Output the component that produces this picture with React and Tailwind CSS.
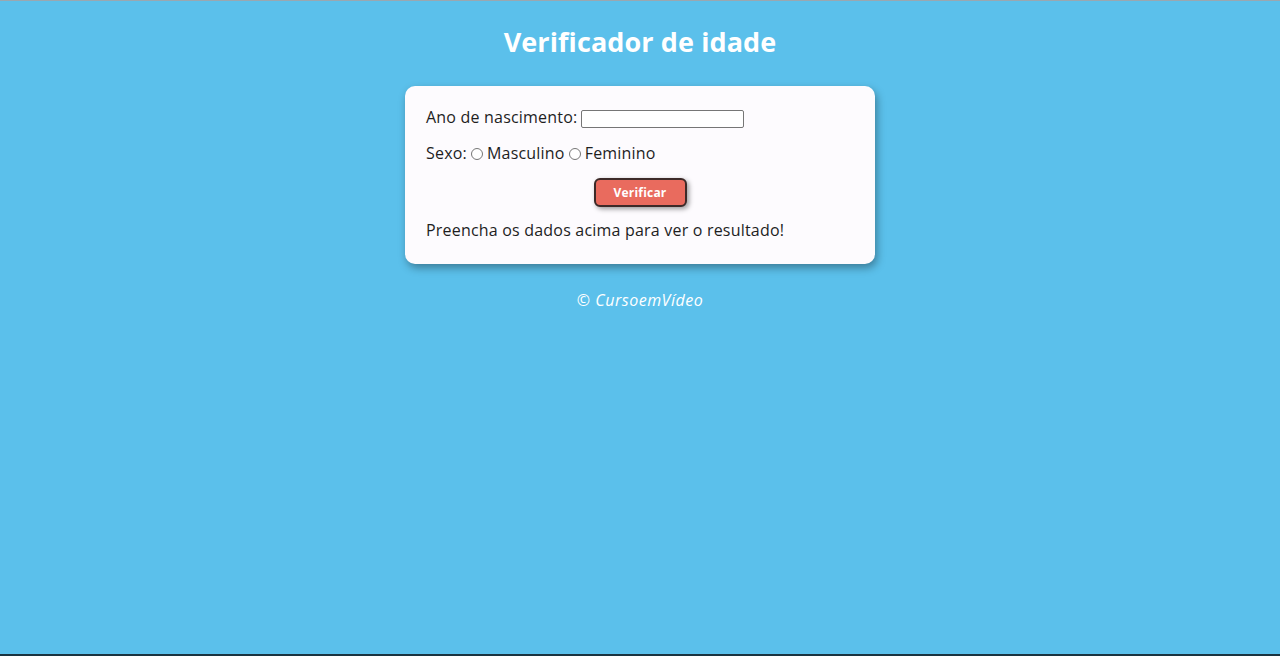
export default function App() {
  return (
    <div className="min-h-[656px] bg-[#5bc0eb] flex flex-col items-center border-t border-[#9aa7b0]" style={{ fontFamily: '"Open Sans", sans-serif' }}>
      <h1 className="mt-[22px] text-[27px] leading-[38px] font-bold text-white tracking-[0.1px]">Verificador de idade</h1>
      <div className="mt-[25px] w-[470px] bg-[#fdfbfe] rounded-[10px] shadow-[2px_4px_8px_rgba(0,0,0,0.35)] px-[21px] pt-[22px] pb-[23px] text-[16px] tracking-[0.2px] text-[#1e1e1e]">
        <div className="flex items-center h-[22px]">
          <span className="mb-[4px]">Ano de nascimento:</span>
          <input type="text" className="ml-[4px] w-[163px] h-[18px] border border-[#767676] rounded-[2px] bg-white" />
        </div>
        <div className="flex items-center h-[22px] mt-[14px]">
          <span className="mb-[4px]">Sexo:</span>
          <span className="ml-[4px] mb-[3px] w-[12px] h-[12px] rounded-full border border-[#767676] bg-white inline-block"></span>
          <span className="ml-[4px] mb-[4px]">Masculino</span>
          <span className="ml-[4px] mb-[3px] w-[12px] h-[12px] rounded-full border border-[#767676] bg-white inline-block"></span>
          <span className="ml-[4px] mb-[4px]">Feminino</span>
        </div>
        <div className="flex justify-center mt-[12px]">
          <button className="w-[93px] h-[29px] bg-[#e96b5e] border-2 border-[#3d2a28] rounded-[6px] text-white text-[12px] font-bold shadow-[2px_2px_5px_rgba(0,0,0,0.4)]">Verificar</button>
        </div>
        <p className="mt-[12px] leading-[22px]">Preencha os dados acima para ver o resultado!</p>
      </div>
      <p className="mt-[24px] text-white italic text-[16px] tracking-[0.5px]">© CursoemVídeo</p>
      <div className="flex-1"></div>
      <div className="w-full h-[2px] bg-[#1a3340]"></div>
    </div>
  );
}
